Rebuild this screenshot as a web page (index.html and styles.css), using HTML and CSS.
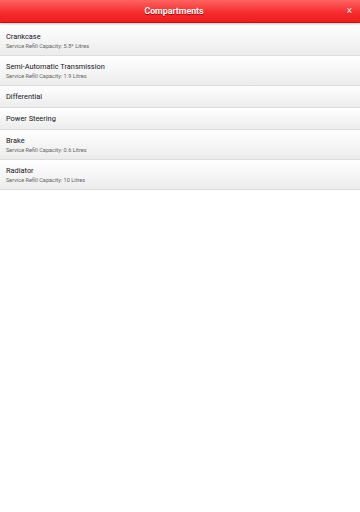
FILE: index.html
```html
<!DOCTYPE html>
<html>
<head>
<meta charset="utf-8">
<link rel="stylesheet" href="styles.css">
</head>
<body>
<header class="bar">
  <div class="bar-title">Compartments</div>
  <div class="bar-close">×</div>
</header>
<ul class="list">
  <li class="item first">
    <div class="item-title">Crankcase</div>
    <div class="item-sub">Service Refill Capacity: 5.8* Litres</div>
  </li>
  <li class="item">
    <div class="item-title">Semi-Automatic Transmission</div>
    <div class="item-sub">Service Refill Capacity: 1.9 Litres</div>
  </li>
  <li class="item">
    <div class="item-title">Differential</div>
  </li>
  <li class="item">
    <div class="item-title">Power Steering</div>
  </li>
  <li class="item">
    <div class="item-title">Brake</div>
    <div class="item-sub">Service Refill Capacity: 0.6 Litres</div>
  </li>
  <li class="item">
    <div class="item-title">Radiator</div>
    <div class="item-sub">Service Refill Capacity: 10 Litres</div>
  </li>
</ul>
</body>
</html>
```
FILE: styles.css
```css
html, body {
  margin: 0;
  padding: 0;
  background: #fff;
  font-family: Roboto, "Liberation Sans", sans-serif;
}
.bar {
  height: 22px;
  display: flex;
  align-items: center;
  justify-content: center;
  position: relative;
  background: linear-gradient(#ff6363, #f52a2a 60%, #ee1d1d);
  border-bottom: 1px solid #c81010;
  box-shadow: 0 1px 2px rgba(0,0,0,0.25);
}
.bar-title {
  color: #fff;
  font-weight: bold;
  font-size: 8.8px;
  text-shadow: 0 1px 0 #b00000;
  margin-left: -12px;
}
.bar-close {
  position: absolute;
  right: 8px;
  top: 5px;
  color: #fff;
  font-size: 10px;
  line-height: 12px;
  text-shadow: 0 0 1px #b00;
}
.list {
  list-style: none;
  margin: 0;
  padding: 0;
}
.item {
  padding: 6px 6px 5px;
  background: linear-gradient(#ffffff, #ececec);
  border-bottom: 1px solid #dcdcdc;
}
.item.first {
  padding-top: 9px;
}
.item-title {
  font-size: 7.4px;
  line-height: 10px;
  color: #15151c;
}
.item-sub {
  font-size: 5.6px;
  line-height: 8px;
  color: #666;
}
```
